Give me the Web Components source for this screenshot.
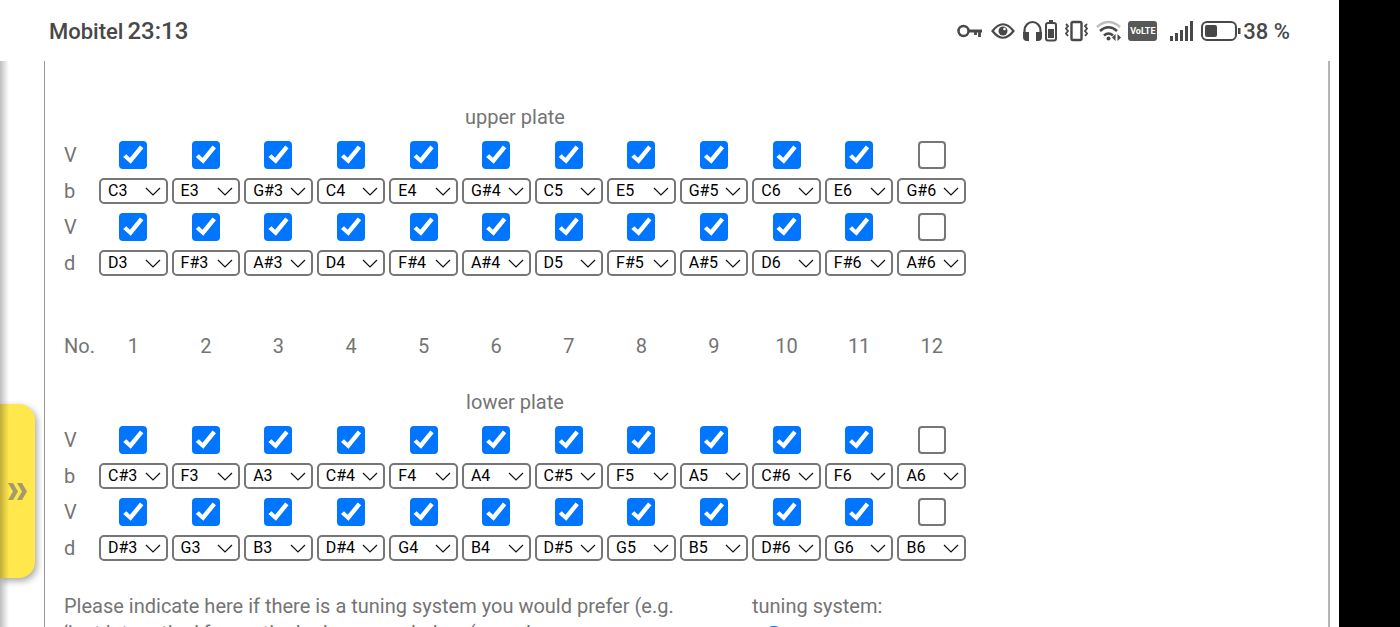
<!DOCTYPE html>
<html lang="en">
<head>
<meta charset="utf-8">
<meta name="viewport" content="width=device-width, initial-scale=1">
<title>Tuning order form</title>
<style>
  html, body { margin: 0; height: 100%; background: #000; }
  body { font-family: Roboto, "Noto Sans", sans-serif; font-size: 20px; line-height: 27px; color: #747474; }
</style>
</head>
<body>
<phone-screen>
  <status-bar slot="status" carrier="Mobitel" time="23:13" battery="38 %"></status-bar>
  <side-tab slot="tab"></side-tab>
  <note-plate name="upper plate"
    blow="C3 E3 G#3 C4 E4 G#4 C5 E5 G#5 C6 E6 G#6"
    draw="D3 F#3 A#3 D4 F#4 A#4 D5 F#5 A#5 D6 F#6 A#6"></note-plate>
  <hole-numbers count="12"></hole-numbers>
  <note-plate name="lower plate"
    blow="C#3 F3 A3 C#4 F4 A4 C#5 F5 A5 C#6 F6 A6"
    draw="D#3 G3 B3 D#4 G4 B4 D#5 G5 B5 D#6 G6 B6"></note-plate>
  <tuning-choice>
    <span slot="hint">Please indicate here if there is a tuning system you would prefer (e.g. ‘just intonation’ for particular keys, needed as (sound</span>
    <span slot="title">tuning system:</span>
  </tuning-choice>
</phone-screen>

<script>
class PhoneScreen extends HTMLElement {
  connectedCallback() {
    this.attachShadow({ mode: 'open' }).innerHTML = `
      <style>
        :host { display: flex; flex-direction: column; position: relative; height: 100vh; margin-right: 61px; background: #fff; overflow: hidden; }
        .view { flex: 1; min-height: 0; position: relative; display: flex; overflow: hidden; }
        .edge { position: absolute; inset: 0 auto 0 0; width: 9px; z-index: 2; pointer-events: none;
          background: linear-gradient(90deg, rgba(0,0,0,.26), rgba(0,0,0,.12) 50%, rgba(0,0,0,0)); }
        main { flex: 1; box-sizing: border-box; margin: 0 9px 0 44px; padding: 38px 19px 0;
          border-left: 1px solid #97979b; border-right: 2px solid #b4b4b4; overflow: auto; scrollbar-width: none; }
      </style>
      <slot name="status"></slot>
      <div class="view">
        <slot name="tab"></slot>
        <main><slot></slot></main>
        <div class="edge"></div>
      </div>`;
  }
}

class StatusBar extends HTMLElement {
  connectedCallback() {
    const a = n => this.getAttribute(n);
    this.attachShadow({ mode: 'open' }).innerHTML = `
      <style>
        :host { display: flex; justify-content: space-between; align-items: center; box-sizing: border-box; height: 61px; padding: 1px 49px 0; color: #484848; font-weight: 500; background: #fff; }
        div { display: flex; align-items: center; }
        .left { gap: 4px; font-size: 22px; }
        .time { font-size: 24px; }
        .right { gap: 8px; font-size: 22px; }
        .pair { gap: 3px; }
        .power { gap: 2px; }
        .net { gap: 13px; }
        .links { gap: 6px; }
        .volte { width: 29px; height: 20px; border-radius: 3px; background: #585858; color: #fff; font-size: 9px; font-weight: 700; line-height: 20px; text-align: center; }
        svg { display: block; fill: none; stroke: #484848; stroke-width: 2; }
        .f { fill: #484848; stroke: none; }
      </style>
      <div class="left"><span>${a('carrier')}</span><span class="time">${a('time')}</span></div>
      <div class="right">
        <svg width="26" height="22"><circle cx="6.500" cy="11" r="5" stroke-width="2.500"/><path d="M11.500 11H25M22.500 11v6M18.500 11v4" stroke-width="2.800"/></svg>
        <svg width="24" height="22"><path d="M1.500 11Q12-2.500 22.500 11Q12 24.500 1.500 11z" stroke-width="2.200"/><circle class="f" cx="12" cy="11" r="4.500"/><circle cx="13.500" cy="9" r="1.300" fill="#fff" stroke="none"/></svg>
        <div class="pair">
          <svg width="19" height="22"><path d="M1.500 15V10.500a8 8.500 0 0 1 16 0V15" stroke-width="2.200"/><path class="f" d="M0 12h6v9H4q-4 0-4-4zM13 12h6v5q0 4-4 4h-2z"/></svg>
          <svg width="12" height="22"><rect x="1" y="3" width="10" height="17.500" rx="2"/><path class="f" d="M4 0h4v2H4zM3 9h6v9H3z"/></svg>
        </div>
        <svg width="23" height="22"><rect x="6.500" y="2" width="10" height="18" rx="1.500" stroke-width="2.400"/><path d="M1 4l2 2-2 2.500 2 2.500-2 2.500 2 2.500M22 4l-2 2 2 2.500-2 2.500 2 2.500-2 2.500" stroke-width="1.800"/></svg>
        <div class="net">
          <div class="links">
            <svg width="26" height="22"><path d="M1 7Q12.500-3 24 7" stroke="#bdbdbd" stroke-width="2.600"/><path d="M4 11Q12.500 3.500 21 11M8 15.500q4.500-4 9 0" stroke-width="2.600"/><circle class="f" cx="12.500" cy="18.500" r="2"/><path class="f" d="M19.500 14v7l-3.500-3.500zM21.500 14v7l3.500-3.500z"/></svg>
            <span class="volte">VoLTE</span>
          </div>
          <svg width="23" height="22"><path class="f" d="M0 16h3v5H0zM5 13h3v8H5zM10 10h3v11h-3zM15 6h3v15h-3zM20 1h3v20h-3z"/></svg>
        </div>
        <div class="power">
          <svg width="40" height="22"><rect x="1" y="2" width="34" height="18" rx="5"/><rect class="f" x="4" y="5" width="12" height="12" rx="2"/><path class="f" d="M37 8h2.500v6H37z"/></svg>
          <span>${a('battery')}</span>
        </div>
      </div>`;
  }
}

class SideTab extends HTMLElement {
  connectedCallback() {
    this.attachShadow({ mode: 'open' }).innerHTML = `
      <style>
        :host { position: absolute; left: 0; top: 343px; z-index: 1; }
        button { display: flex; align-items: center; justify-content: center; width: 35px; height: 174px; padding: 0; border: 0; border-radius: 0 16px 16px 0; background: #ffe74c; box-shadow: 2px 3px 7px rgba(0,0,0,.35); }
        svg { display: block; fill: #a39c6a; }
      </style>
      <button type="button" aria-label="Open menu"><svg width="19" height="17"><path d="M0 0h5l5 8.500L5 17H0l5-8.500zM9 0h5l5 8.500-5 8.500H9l5-8.500z"/></svg></button>`;
  }
}

const GRID = `
  :host { display: block; max-width: 902px; }
  .grid { display: grid; grid-template-columns: 31px repeat(12, minmax(0, 1fr)); column-gap: 4px; grid-auto-rows: 36px; align-items: center; justify-items: center; }
  .name { justify-self: start; }`;

class NotePlate extends HTMLElement {
  connectedCallback() {
    const plate = this.getAttribute('name');
    const rows = [['b', 'blow'], ['d', 'draw']].map(([letter, key]) => {
      const notes = this.getAttribute(key).split(' ');
      return `<span class="name">V</span>` +
        notes.map((n, i) => `<input type="checkbox" aria-label="${plate} ${key} ${i + 1} valve"${i < 11 ? ' checked' : ''}>`).join('') +
        `<span class="name">${letter}</span>` +
        notes.map((n, i) => `<note-select note="${n}" label="${plate} ${key} ${i + 1}"></note-select>`).join('');
    }).join('');
    this.attachShadow({ mode: 'open' }).innerHTML = `
      <style>${GRID}
        h2 { margin: 0; padding-bottom: 2px; font: inherit; line-height: 36px; text-align: center; }
        input { appearance: none; box-sizing: border-box; width: 28px; height: 28px; margin: 0; border: 2px solid #767676; border-radius: 4px; background: #fff; }
        input:checked { border: 0; background: #0075ff; }
        input:checked::before { content: ""; display: block; width: 28px; height: 28px; background: #fff;
          clip-path: polygon(14% 57%, 25% 47%, 38% 60%, 74% 16%, 86% 26%, 41% 81%); }
        note-select { justify-self: stretch; }
      </style>
      <h2>${plate}</h2>
      <div class="grid">${rows}</div>`;
  }
}

class NoteSelect extends HTMLElement {
  connectedCallback() {
    const note = this.getAttribute('note');
    this.attachShadow({ mode: 'open' }).innerHTML = `
      <style>
        :host { display: grid; align-items: center; }
        select, svg { grid-area: 1 / 1; }
        select { appearance: none; box-sizing: border-box; width: 100%; height: 26px; margin: 0; padding: 0 0 0 7px; border: 2px solid #767676; border-radius: 5px; background: #fff; color: #000; font: 16px/22px Roboto, "Noto Sans", sans-serif; }
        svg { justify-self: end; margin-right: 7px; fill: none; stroke: #111; stroke-width: 1.200; pointer-events: none; }
      </style>
      <select aria-label="${this.getAttribute('label')}"><option selected>${note}</option></select>
      <svg width="16" height="9"><path d="M1 1l7 7 7-7"/></svg>`;
  }
}

class HoleNumbers extends HTMLElement {
  connectedCallback() {
    const n = +this.getAttribute('count');
    this.attachShadow({ mode: 'open' }).innerHTML = `
      <style>${GRID}
        :host { padding: 47px 0 20px; }
      </style>
      <div class="grid"><span class="name">No.</span>${Array.from({ length: n }, (_, i) => `<span>${i + 1}</span>`).join('')}</div>`;
  }
}

class TuningChoice extends HTMLElement {
  connectedCallback() {
    this.attachShadow({ mode: 'open' }).innerHTML = `
      <style>
        :host { display: grid; grid-template-columns: minmax(0, 640px) minmax(0, 1fr); column-gap: 48px; padding-top: 27px; }
        p { margin: 0; }
        input { display: block; appearance: none; box-sizing: border-box; width: 26px; height: 26px; margin: 6px 0 0 9px; border: 3px solid #0075ff; border-radius: 50%; background: #0075ff content-box; padding: 4px; }
      </style>
      <p><slot name="hint"></slot></p>
      <div>
        <p id="title"><slot name="title"></slot></p>
        <input type="radio" name="tuning" aria-labelledby="title" checked>
      </div>`;
  }
}

customElements.define('phone-screen', PhoneScreen);
customElements.define('status-bar', StatusBar);
customElements.define('side-tab', SideTab);
customElements.define('note-select', NoteSelect);
customElements.define('note-plate', NotePlate);
customElements.define('hole-numbers', HoleNumbers);
customElements.define('tuning-choice', TuningChoice);
</script>
</body>
</html>
